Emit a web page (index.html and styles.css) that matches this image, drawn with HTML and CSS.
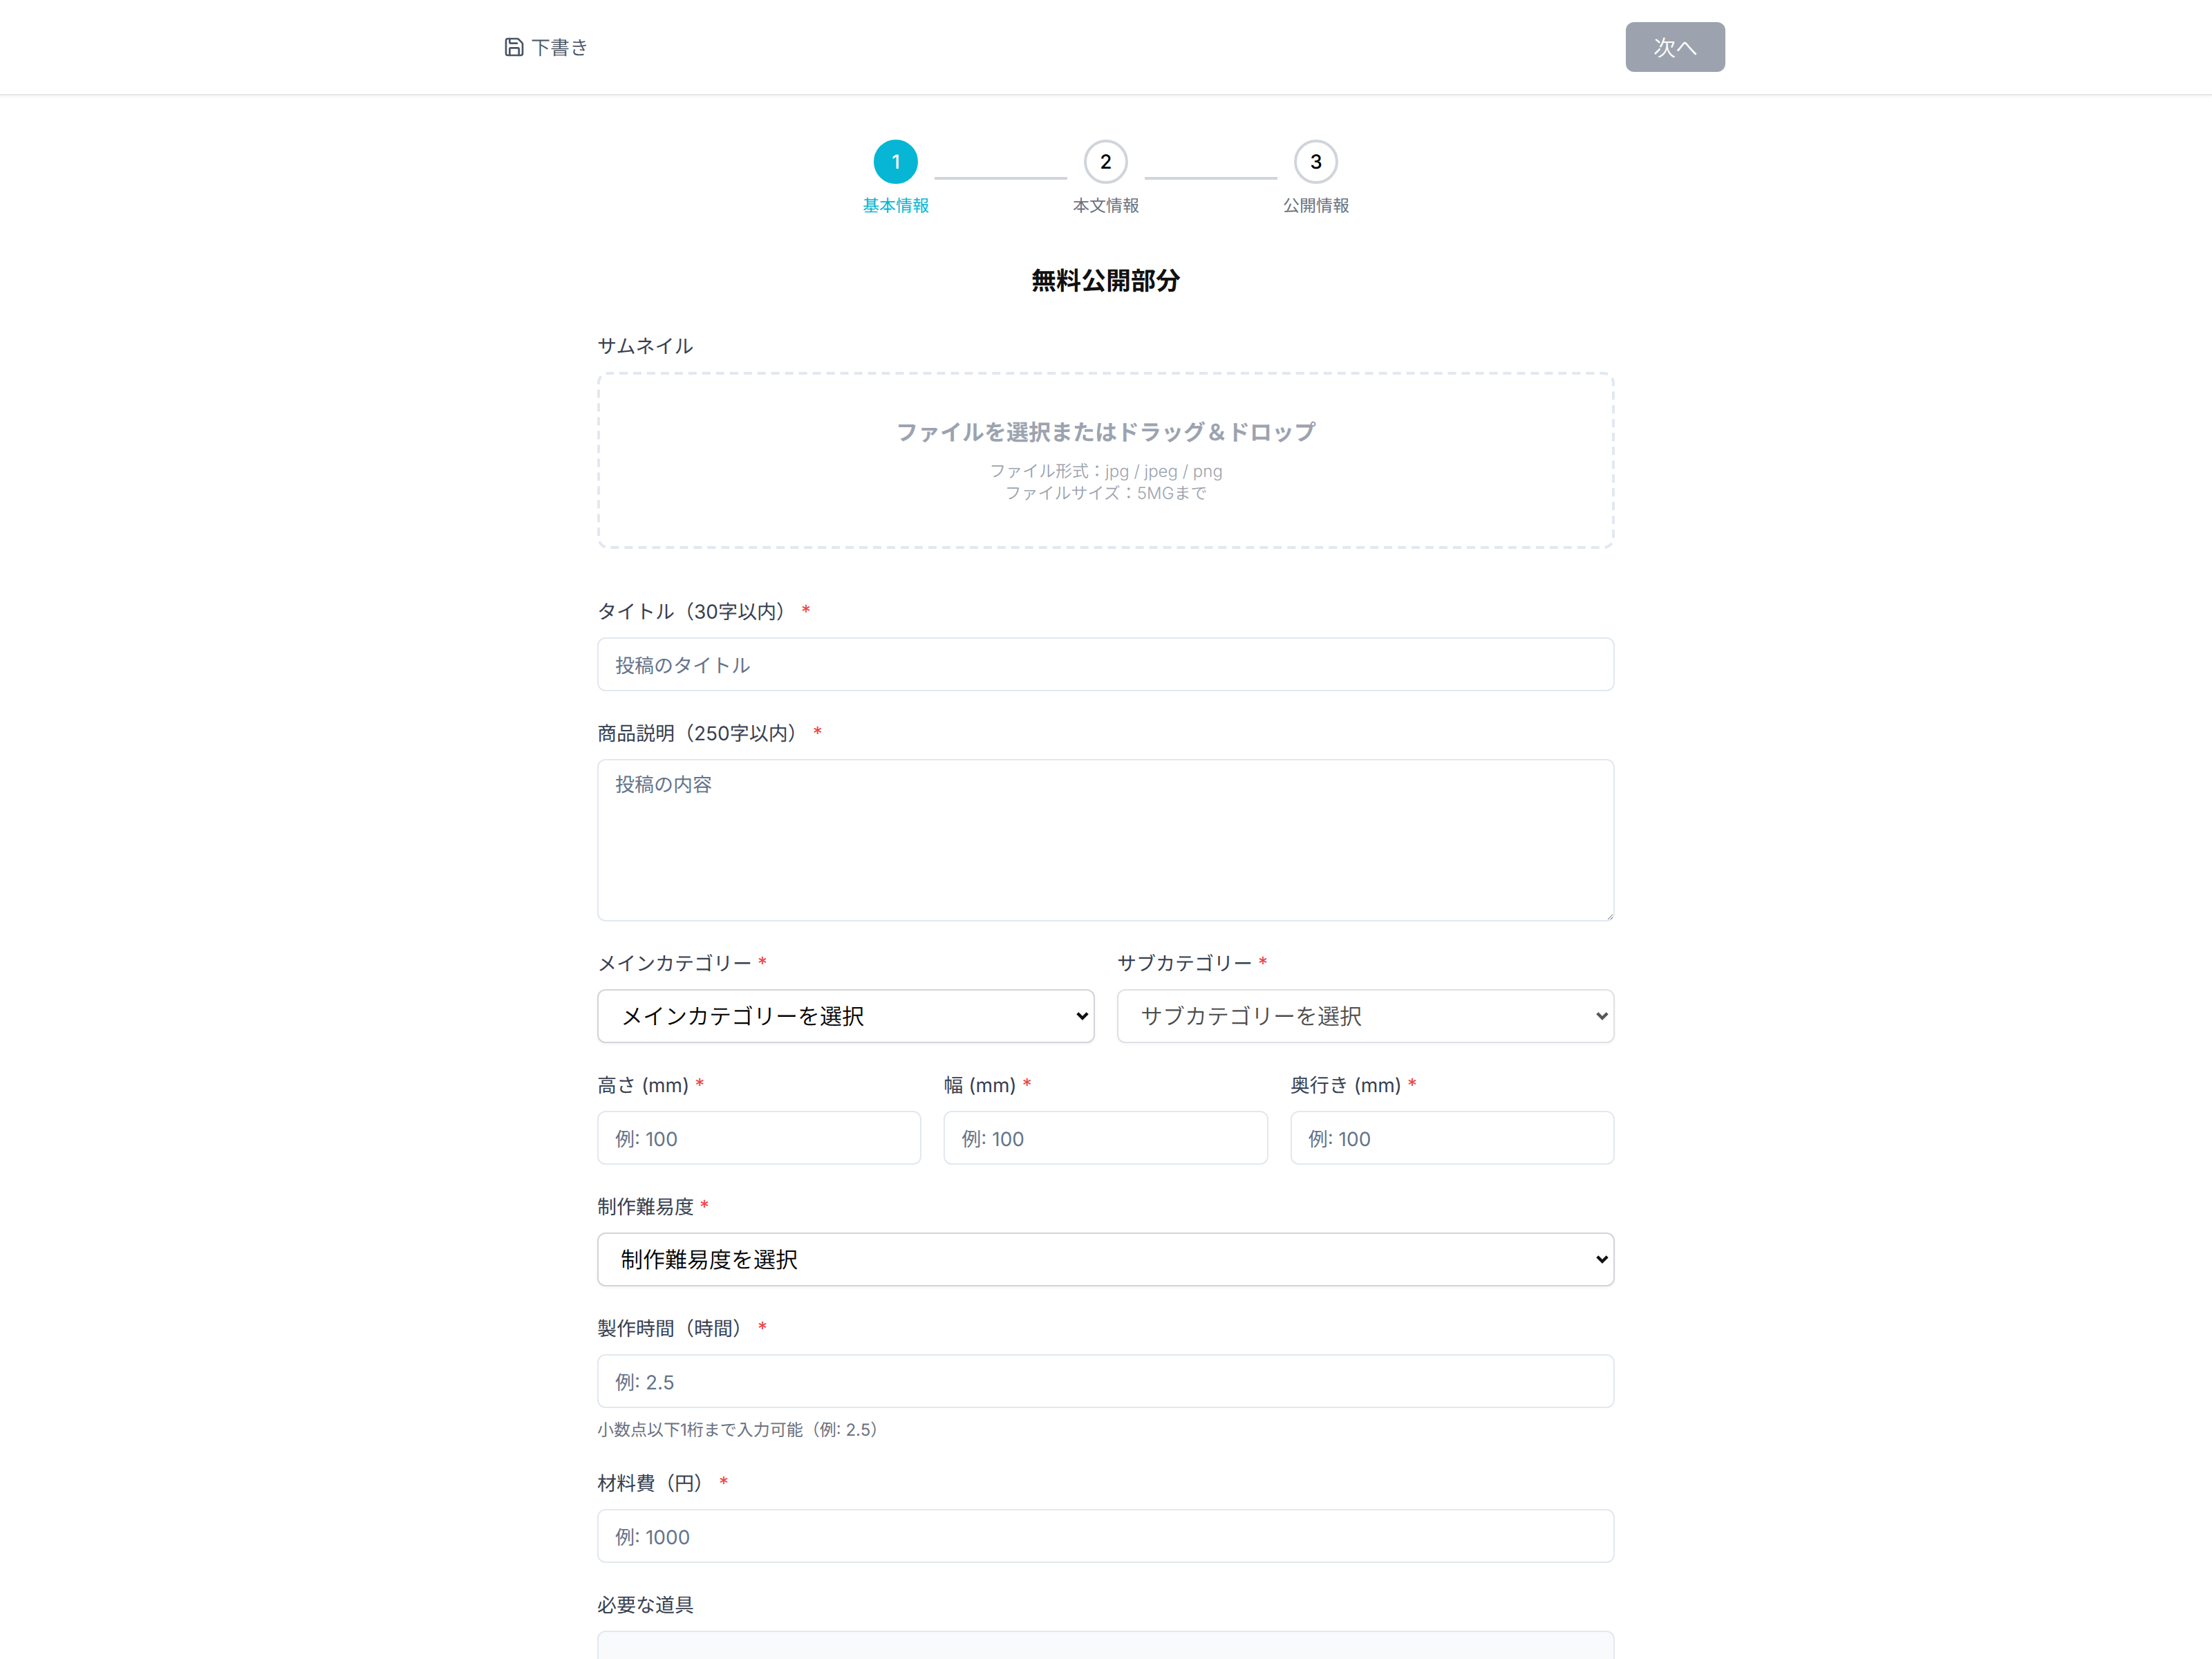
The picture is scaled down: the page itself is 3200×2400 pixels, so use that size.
FILE: index.html
```html
<!DOCTYPE html>
<html lang="ja">
<head>
    <meta charset="UTF-8">
    <meta name="viewport" content="width=device-width, initial-scale=1.0">
    <title>無料公開部分</title>
    <link rel="stylesheet" href="styles.css">
</head>
<body>
    <header class="top-bar">
        <div class="top-bar-inner">
            <button type="button" class="draft-btn">
                <svg class="draft-icon" viewBox="0 0 24 24" fill="none" stroke="currentColor" stroke-width="2" stroke-linecap="round" stroke-linejoin="round">
                    <path d="M15.2 3a2 2 0 0 1 1.4.6l3.8 3.8a2 2 0 0 1 .6 1.4V19a2 2 0 0 1-2 2H5a2 2 0 0 1-2-2V5a2 2 0 0 1 2-2z"/>
                    <path d="M17 21v-7a1 1 0 0 0-1-1H8a1 1 0 0 0-1 1v7"/>
                    <path d="M7 3v4a1 1 0 0 0 1 1h7"/>
                </svg>
                下書き
            </button>
            <button type="button" class="next-btn">次へ</button>
        </div>
    </header>

    <main class="page">
        <ol class="steps">
            <li class="step active"><span class="step-num">1</span><span class="step-label">基本情報</span></li>
            <li class="step-line"></li>
            <li class="step"><span class="step-num">2</span><span class="step-label">本文情報</span></li>
            <li class="step-line"></li>
            <li class="step"><span class="step-num">3</span><span class="step-label">公開情報</span></li>
        </ol>

        <h1 class="section-title">無料公開部分</h1>

        <form>
            <div class="field thumb-field">
                <label class="field-label">サムネイル</label>
                <div class="dropzone">
                    <svg class="drop-border" width="736" height="128">
                        <rect x="1" y="1" width="734" height="126" rx="7"/>
                    </svg>
                    <p class="drop-title">ファイルを選択またはドラッグ＆ドロップ</p>
                    <p class="drop-note">ファイル形式：jpg / jpeg / png</p>
                    <p class="drop-note">ファイルサイズ：5MGまで</p>
                </div>
            </div>

            <div class="field">
                <label class="field-label">タイトル（30字以内）<span class="req">*</span></label>
                <input type="text" class="text-input" placeholder="投稿のタイトル">
            </div>

            <div class="field">
                <label class="field-label">商品説明（250字以内）<span class="req">*</span></label>
                <textarea class="text-input text-area" placeholder="投稿の内容"></textarea>
            </div>

            <div class="field-row two">
                <div class="field">
                    <label class="field-label">メインカテゴリー<span class="req">*</span></label>
                    <div class="select-wrap">
                        <select class="select-input">
                            <option>メインカテゴリーを選択</option>
                        </select>
                        <svg class="select-arrow" viewBox="0 0 10 7"><polyline points="1.4,1.4 5,5 8.6,1.4"/></svg>
                    </div>
                </div>
                <div class="field">
                    <label class="field-label">サブカテゴリー<span class="req">*</span></label>
                    <div class="select-wrap off">
                        <select class="select-input" disabled>
                            <option>サブカテゴリーを選択</option>
                        </select>
                        <svg class="select-arrow" viewBox="0 0 10 7"><polyline points="1.4,1.4 5,5 8.6,1.4"/></svg>
                    </div>
                </div>
            </div>

            <div class="field-row three">
                <div class="field">
                    <label class="field-label">高さ (mm)<span class="req">*</span></label>
                    <input type="text" class="text-input" placeholder="例: 100">
                </div>
                <div class="field">
                    <label class="field-label">幅 (mm)<span class="req">*</span></label>
                    <input type="text" class="text-input" placeholder="例: 100">
                </div>
                <div class="field">
                    <label class="field-label">奥行き (mm)<span class="req">*</span></label>
                    <input type="text" class="text-input" placeholder="例: 100">
                </div>
            </div>

            <div class="field">
                <label class="field-label">制作難易度<span class="req">*</span></label>
                <div class="select-wrap">
                    <select class="select-input">
                        <option>制作難易度を選択</option>
                    </select>
                    <svg class="select-arrow" viewBox="0 0 10 7"><polyline points="1.4,1.4 5,5 8.6,1.4"/></svg>
                </div>
            </div>

            <div class="field">
                <label class="field-label">製作時間（時間）<span class="req">*</span></label>
                <input type="text" class="text-input" placeholder="例: 2.5">
                <p class="hint">小数点以下1桁まで入力可能（例: 2.5）</p>
            </div>

            <div class="field">
                <label class="field-label">材料費（円）<span class="req">*</span></label>
                <input type="text" class="text-input" placeholder="例: 1000">
            </div>

            <div class="field">
                <label class="field-label">必要な道具</label>
                <div class="tools-box"></div>
            </div>
        </form>
    </main>
</body>
</html>
```

FILE: styles.css
```css
html {
    zoom: 2;
}
* {
    text-rendering: geometricPrecision;
}
body {
    margin: 0;
    height: 1200px;
    overflow: hidden;
    background: #fff;
    color: #111827;
    font-family: Inter, "Noto Sans CJK JP", sans-serif;
    font-weight: 400;
}
p {
    margin: 0;
}

.top-bar {
    background: #fff;
    border-bottom: 1px solid #e5e7eb;
    box-shadow: 0 1px 2px rgba(0, 0, 0, 0.05);
}
.top-bar-inner {
    max-width: 896px;
    margin: 0 auto;
    padding: 16px 0;
    display: flex;
    justify-content: space-between;
    align-items: center;
}
.draft-btn {
    display: flex;
    align-items: center;
    gap: 4px;
    padding: 0 12px;
    border: 0;
    background: none;
    color: #4b5563;
    font: inherit;
    font-size: 14px;
    font-weight: 350;
}
.draft-icon {
    width: 16px;
    height: 16px;
}
.next-btn {
    width: 72px;
    height: 36px;
    border: 0;
    border-radius: 6px;
    background: #9ca3af;
    color: #fff;
    font: inherit;
    font-size: 16px;
    font-weight: 350;
}

.page {
    width: 736px;
    margin: 0 auto;
}

.steps {
    display: flex;
    justify-content: center;
    align-items: center;
    list-style: none;
    margin: 0;
    padding: 32px 0 0;
}
.step {
    width: 48px;
    display: flex;
    flex-direction: column;
    align-items: center;
    gap: 8px;
}
.step-num {
    width: 32px;
    height: 32px;
    box-sizing: border-box;
    border: 2px solid #d1d5db;
    border-radius: 50%;
    display: flex;
    align-items: center;
    justify-content: center;
    font-size: 14px;
    font-weight: 500;
    color: #000;
}
.step-label {
    font-size: 12px;
    line-height: 16px;
    color: #6b7280;
    white-space: nowrap;
}
.step-line {
    width: 96px;
    height: 2px;
    margin: 0 4px;
    background: #d1d5db;
}
.step.active .step-num {
    border-color: #06b6d4;
    background: #06b6d4;
    color: #fff;
}
.step.active .step-label {
    color: #06b6d4;
}

.section-title {
    margin: 32px 0 23px;
    text-align: center;
    font-size: 18px;
    line-height: 28px;
    font-weight: 700;
    color: #111;
}

.field {
    margin-bottom: 20px;
}
.thumb-field {
    margin-bottom: 35px;
}
.field-label {
    display: block;
    margin-bottom: 8px;
    font-size: 14px;
    line-height: 21px;
    color: #374151;
}
.req {
    margin-left: 4px;
    color: #ef4444;
}

.dropzone {
    position: relative;
    height: 128px;
    display: flex;
    flex-direction: column;
    justify-content: center;
    align-items: center;
}
.drop-border {
    position: absolute;
    top: 0;
    left: 0;
    fill: none;
    stroke: #e2e8f0;
    stroke-width: 2;
    stroke-dasharray: 6 3.988;
    stroke-dashoffset: 2;
}
.drop-title {
    margin-bottom: 8px;
    font-size: 16px;
    line-height: 24px;
    font-weight: 600;
    color: #9ca3af;
}
.drop-note {
    font-size: 12px;
    line-height: 16px;
    font-weight: 350;
    color: #9ca3af;
}

.text-input {
    display: block;
    width: 100%;
    box-sizing: border-box;
    height: 39px;
    padding: 12px 12px 10px;
    border: 1px solid #e2e8f0;
    border-radius: 6px;
    background: #fff;
    font: inherit;
    font-size: 14px;
    line-height: 17px;
    color: #111827;
}
.text-input::placeholder {
    color: #64748b;
    opacity: 1;
}
.text-area {
    height: 117.5px;
    padding-top: 9px;
}

.select-wrap {
    position: relative;
}
.select-input {
    display: block;
    width: 100%;
    box-sizing: border-box;
    height: 39px;
    padding: 0 16px;
    border: 1px solid #d1d5db;
    border-radius: 6px;
    background: #fff;
    box-shadow: 0 1px 2px rgba(0, 0, 0, 0.05);
    appearance: none;
    font: inherit;
    font-size: 16px;
    font-weight: 350;
    color: #000;
}
.select-arrow {
    position: absolute;
    top: 16px;
    right: 4px;
    width: 10px;
    height: 7px;
    fill: none;
    stroke: #111;
    stroke-width: 2.2;
}
.select-wrap.off .select-arrow {
    opacity: 0.7;
}

.field-row {
    display: grid;
    gap: 16px;
}
.field-row.two {
    grid-template-columns: repeat(2, 1fr);
}
.field-row.three {
    grid-template-columns: repeat(3, 1fr);
}

.hint {
    margin-top: 8px;
    font-size: 12px;
    line-height: 16px;
    color: #6b7280;
}

.tools-box {
    height: 96px;
    box-sizing: border-box;
    border: 1px solid #e2e8f0;
    border-radius: 6px;
    background: #f8fafc;
}
```
